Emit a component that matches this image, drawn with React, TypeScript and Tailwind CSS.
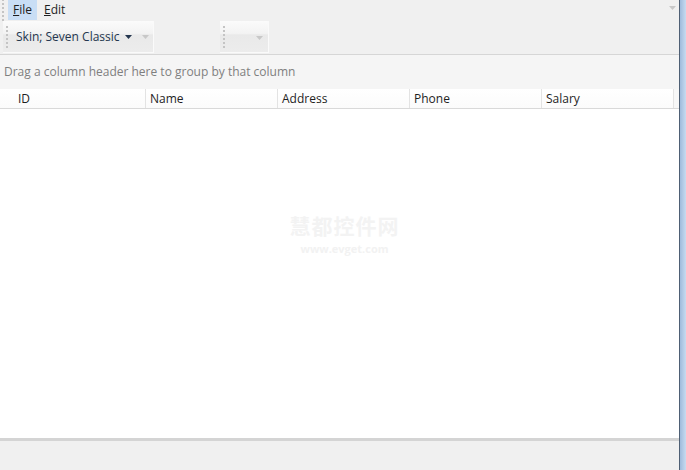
import React from "react";

const font = { fontFamily: '"Open Sans", "Noto Sans CJK SC", sans-serif' };

function Grip({ className = "" }: { className?: string }) {
  return (
    <div className={`flex flex-col gap-[2px] ${className}`}>
      {[0, 1, 2, 3, 4, 5].map((i) => (
        <div key={i} className="h-[2px] w-[2px] bg-[#c4c4c4]" />
      ))}
    </div>
  );
}

function Arrow({ color = "#c8c8c8" }: { color?: string }) {
  return (
    <svg width="7" height="4" viewBox="0 0 7 4">
      <path d="M0 0h7L3.5 4z" fill={color} />
    </svg>
  );
}

const columns = ["ID", "Name", "Address", "Phone", "Salary"];

export default function App() {
  return (
    <div className="flex h-[470px] w-full text-[12px] leading-[16px] text-[#1e1e1e]" style={font}>
      <div className="flex flex-1 flex-col bg-[#f0f0f0]">
        {/* menu bar */}
        <div className="flex h-[20px] items-center">
          <Grip className="ml-[2px] mr-[4px]" />
          <div className="flex h-full items-center bg-[#c9def5] px-[5px]">
            <span>
              <span className="underline">F</span>ile
            </span>
          </div>
          <div className="ml-[2px] flex h-full items-center px-[5px]">
            <span>
              <span className="underline">E</span>dit
            </span>
          </div>
          <div className="ml-auto mr-[3px] mb-[4px]">
            <Arrow />
          </div>
        </div>

        {/* toolbars */}
        <div className="flex h-[35px] items-start border-b border-[#d6d6d6] pt-[1px]">
          <div className="ml-[3px] flex h-[32px] w-[151px] items-center border-r border-b border-[#fafafa] bg-[linear-gradient(#fbfbfb_0%,#f3f3f3_40%,#e9e9e9_45%,#ececec_100%)]">
            <Grip className="ml-[3px]" />
            <span className="ml-[8px] text-[#24364e]">Skin; Seven Classic</span>
            <span className="ml-[5px] mt-[1px]">
              <Arrow color="#24364e" />
            </span>
            <span className="ml-[10px] mt-[1px]">
              <Arrow />
            </span>
          </div>
          <div className="ml-[66px] flex h-[32px] w-[49px] items-center border-r border-b border-[#fafafa] bg-[linear-gradient(#fbfbfb_0%,#f3f3f3_40%,#e9e9e9_45%,#ececec_100%)]">
            <Grip className="ml-[3px]" />
            <span className="ml-auto mr-[5px] mt-[2px]">
              <Arrow />
            </span>
          </div>
        </div>

        {/* group panel */}
        <div className="flex h-[34px] items-center bg-[#f5f5f5] pl-[4px] text-[#7f7f7f]">
          Drag a column header here to group by that column
        </div>

        {/* grid */}
        <div className="flex h-[352px] flex-col border-b-[3px] border-[#d4d4d4] bg-white">
          <div className="flex h-[20px] items-stretch border-b border-[#d9d9d9] bg-[linear-gradient(#ffffff,#fbfbfb)]">
            <div className="w-[14px]" />
            {columns.map((c) => (
              <div key={c} className="flex w-[132px] items-center border-r border-[#e3e3e3] pl-[4px]">
                {c}
              </div>
            ))}
            <div className="flex-1 bg-[#f7f7f7]" />
          </div>
          <div className="flex flex-1 flex-col items-center gap-[3px] pt-[104px] pl-[10px]">
            <span className="text-[21px] leading-[26px] font-bold tracking-[1px] text-[#f3f3f3]">慧都控件网</span>
            <span className="text-[11px] leading-[13px] font-bold text-[#f2f2f2]">www.evget.com</span>
          </div>
        </div>
      </div>
      <div className="w-[7px] border-l border-[#4e5f74] bg-[linear-gradient(90deg,#9fbbdc,#c7dbf0)]" />
    </div>
  );
}
